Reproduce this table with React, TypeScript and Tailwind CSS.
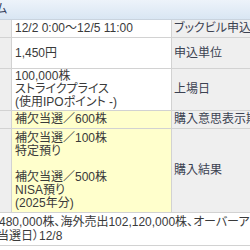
import React from 'react';

interface Row {
  height: string;
  value: React.ReactNode;
  label: string;
  highlight?: boolean;
}

const rows: Row[] = [
  { height: 'h-[18px]', value: '12/2 0:00〜12/5 11:00', label: 'ブックビル申込' },
  { height: 'h-[31px]', value: '1,450円', label: '申込単位' },
  {
    height: 'h-[42px]',
    value: (
      <>
        <div>100,000株</div>
        <div>ストライクプライス</div>
        <div>(使用IPOポイント -)</div>
      </>
    ),
    label: '上場日',
  },
  { height: 'h-[18px]', value: '補欠当選／600株', label: '購入意思表示期間', highlight: true },
  {
    height: 'h-[84px]',
    value: (
      <>
        <div>補欠当選／100株</div>
        <div>特定預り</div>
        <div>&nbsp;</div>
        <div>補欠当選／500株</div>
        <div>NISA預り</div>
        <div>(2025年分)</div>
      </>
    ),
    label: '購入結果',
    highlight: true,
  },
];

export default function App() {
  return (
    <div className="w-[250px] h-[250px] overflow-hidden bg-white text-[12px] leading-[13px] text-[#3a3a3a] [font-family:'Liberation_Sans','Noto_Sans_CJK_JP',sans-serif] [font-feature-settings:'palt']">
      <div className="h-[20px] flex items-center border-b border-[#c9d3de] bg-gradient-to-b from-[#edf3fa] to-[#d9e6f3] text-[#34405a] whitespace-nowrap">
        <span className="-ml-[4px]">ム</span>
      </div>

      {rows.map((row, i) => (
        <div key={i} className={`flex border-b border-[#d2d2d2] ${row.height}`}>
          <div className="w-[12px] shrink-0 bg-[#eeeeee] border-r border-[#d2d2d2]" />
          <div
            className={`w-[160px] shrink-0 flex flex-col justify-center pl-[3px] border-r border-[#d2d2d2] whitespace-nowrap overflow-hidden ${
              row.highlight ? 'bg-[#ffffcc]' : 'bg-white'
            }`}
          >
            {row.value}
          </div>
          <div className="flex-1 flex items-center pl-[2px] bg-[#efefef] whitespace-nowrap overflow-hidden text-[#3c4252]">
            {row.label}
          </div>
        </div>
      ))}

      <div className="h-[33px] flex flex-col justify-center border-b border-[#d2d2d2] whitespace-nowrap overflow-hidden leading-[14px]">
        <div className="-ml-px">480,000株、海外売出102,120,000株、オーバーアロットメント</div>
        <div className="-ml-[3px]">当選日）12/8</div>
      </div>
    </div>
  );
}
